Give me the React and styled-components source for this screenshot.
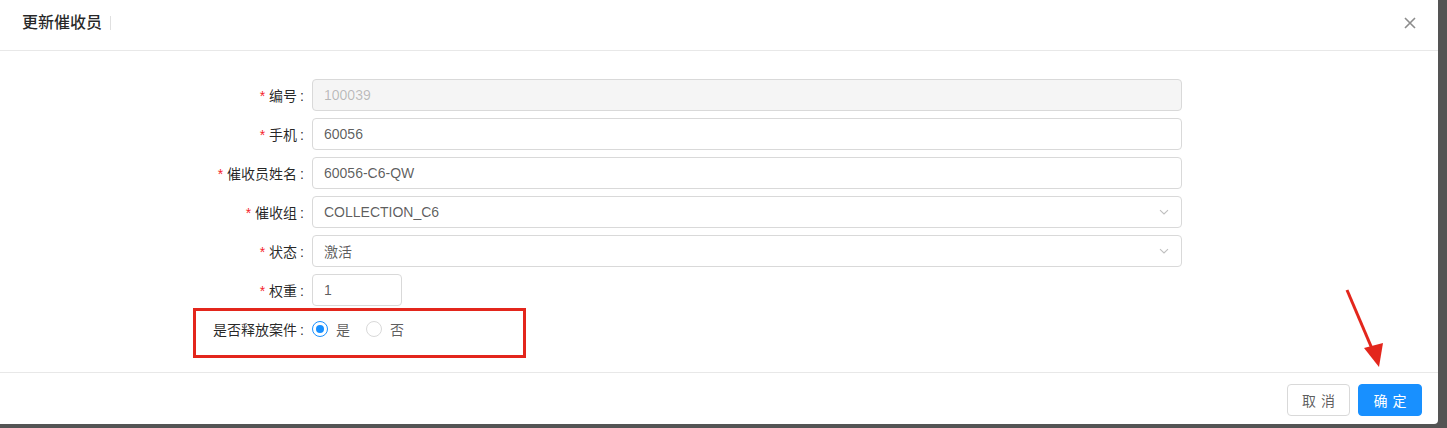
import React from "react";
import styled, { createGlobalStyle } from "styled-components";

const Global = createGlobalStyle`
  html, body { margin: 0; padding: 0; }
  body {
    background: #545454;
    font-family: "Liberation Sans", "Noto Sans CJK SC", sans-serif;
    font-size: 14px;
    color: rgba(0,0,0,0.65);
    overflow: hidden;
  }
`;

const Page = styled.div`
  width: 1447px;
  height: 428px;
  position: relative;
`;

const Modal = styled.div`
  position: relative;
  width: 1438px;
  height: 424px;
  background: #fff;
  border-bottom-right-radius: 4px;
  display: flex;
  flex-direction: column;
`;

const Header = styled.div`
  height: 51px;
  border-bottom: 1px solid #e8e8e8;
  padding: 12px 0 0 22px;
  box-sizing: border-box;
  display: flex;
  align-items: flex-start;
  justify-content: space-between;
`;

const Title = styled.div`
  font-size: 16px;
  line-height: 22px;
  font-weight: 500;
  color: rgba(0,0,0,0.85);
  display: flex;
  align-items: center;
`;

const Caret = styled.span`
  display: inline-block;
  width: 1px;
  height: 14px;
  background: #e0e0e0;
  margin-left: 8px;
`;

const Close = styled.button`
  border: none;
  background: none;
  padding: 0;
  margin: 5px 22px 0 0;
  width: 12px;
  height: 12px;
  display: flex;
  cursor: pointer;
`;

const Body = styled.div`
  flex: 1;
  padding: 28px 0 0 0;
  display: flex;
  flex-direction: column;
  gap: 7px;
`;

const Row = styled.div`
  display: flex;
  align-items: center;
  height: 32px;
`;

const Label = styled.label`
  width: 312px;
  padding-right: 8px;
  box-sizing: border-box;
  text-align: right;
  color: rgba(0,0,0,0.85);
  font-size: 14px;
  white-space: nowrap;
  &::after {
    content: ":";
    margin-left: 3px;
  }
`;

const Star = styled.span`
  color: #f5222d;
  margin-right: 4px;
  font-family: "Liberation Sans", sans-serif;
`;

const Input = styled.div`
  width: ${p => p.$w || 870}px;
  height: 32px;
  box-sizing: border-box;
  border: 1px solid #d9d9d9;
  border-radius: 4px;
  padding: 0 11px;
  display: flex;
  align-items: center;
  justify-content: space-between;
  background: ${p => (p.$disabled ? "#f5f5f5" : "#fff")};
  color: ${p => (p.$disabled ? "rgba(0,0,0,0.25)" : "rgba(0,0,0,0.65)")};
  font-size: 14px;
`;

const Radios = styled.div`
  display: flex;
  align-items: center;
`;

const RadioItem = styled.span`
  display: inline-flex;
  align-items: center;
  margin-right: 8px;
  color: rgba(0,0,0,0.65);
`;

const Circle = styled.span`
  width: 16px;
  height: 16px;
  box-sizing: border-box;
  border-radius: 50%;
  border: 1px solid ${p => (p.$on ? "#1890ff" : "#d9d9d9")};
  display: flex;
  align-items: center;
  justify-content: center;
  &::after {
    content: "";
    width: 8px;
    height: 8px;
    border-radius: 50%;
    background: #1890ff;
    display: ${p => (p.$on ? "block" : "none")};
  }
`;

const RadioText = styled.span`
  padding: 0 8px;
`;

const Footer = styled.div`
  border-top: 1px solid #e8e8e8;
  padding: 11px 16px 8px;
  display: flex;
  justify-content: flex-end;
  gap: 8px;
`;

const Button = styled.button`
  height: 32px;
  width: ${p => p.$w}px;
  border-radius: 4px;
  font-family: "Liberation Sans", "Noto Sans CJK SC", sans-serif;
  font-size: 14px;
  letter-spacing: 5px;
  text-indent: 5px;
  border: 1px solid ${p => (p.$primary ? "#1890ff" : "#d9d9d9")};
  background: ${p => (p.$primary ? "#1890ff" : "#fff")};
  color: ${p => (p.$primary ? "#fff" : "rgba(0,0,0,0.65)")};
  padding: 0;
`;

const Highlight = styled.div`
  position: absolute;
  left: 193px;
  top: 308px;
  width: 333px;
  height: 50px;
  box-sizing: border-box;
  border: 3px solid #e3261c;
  pointer-events: none;
`;

const Arrow = styled.svg`
  position: absolute;
  left: 1340px;
  top: 285px;
  pointer-events: none;
`;

const Chevron = () => (
  <svg width="12" height="12" viewBox="0 0 12 12">
    <path d="M2 4.2 L6 8 L10 4.2" fill="none" stroke="#bfbfbf" strokeWidth="1.1" />
  </svg>
);

const Field = ({ label, required = true, children }) => (
  <Row>
    <Label>
      {required && <Star>*</Star>}
      {label}
    </Label>
    {children}
  </Row>
);

export default function App() {
  return (
    <>
      <Global />
      <Page>
        <Modal>
          <Header>
            <Title>
              更新催收员
              <Caret />
            </Title>
            <Close aria-label="close">
              <svg width="12" height="12" viewBox="0 0 12 12">
                <path d="M1 1 L11 11 M11 1 L1 11" stroke="#8c8c8c" strokeWidth="1.6" />
              </svg>
            </Close>
          </Header>
          <Body>
            <Field label="编号">
              <Input $disabled>100039</Input>
            </Field>
            <Field label="手机">
              <Input>60056</Input>
            </Field>
            <Field label="催收员姓名">
              <Input>60056-C6-QW</Input>
            </Field>
            <Field label="催收组">
              <Input>
                COLLECTION_C6
                <Chevron />
              </Input>
            </Field>
            <Field label="状态">
              <Input>
                激活
                <Chevron />
              </Input>
            </Field>
            <Field label="权重">
              <Input $w={90}>1</Input>
            </Field>
            <Field label="是否释放案件" required={false}>
              <Radios>
                <RadioItem>
                  <Circle $on />
                  <RadioText>是</RadioText>
                </RadioItem>
                <RadioItem>
                  <Circle />
                  <RadioText>否</RadioText>
                </RadioItem>
              </Radios>
            </Field>
          </Body>
          <Footer>
            <Button $w={63}>取消</Button>
            <Button $w={64} $primary>确定</Button>
          </Footer>
          <Highlight />
          <Arrow width="50" height="90" viewBox="0 0 50 90">
            <line x1="7" y1="5" x2="33" y2="66" stroke="#e3261c" strokeWidth="3" />
            <polygon points="39,82 24,63 43,58" fill="#e3261c" />
          </Arrow>
        </Modal>
      </Page>
    </>
  );
}
